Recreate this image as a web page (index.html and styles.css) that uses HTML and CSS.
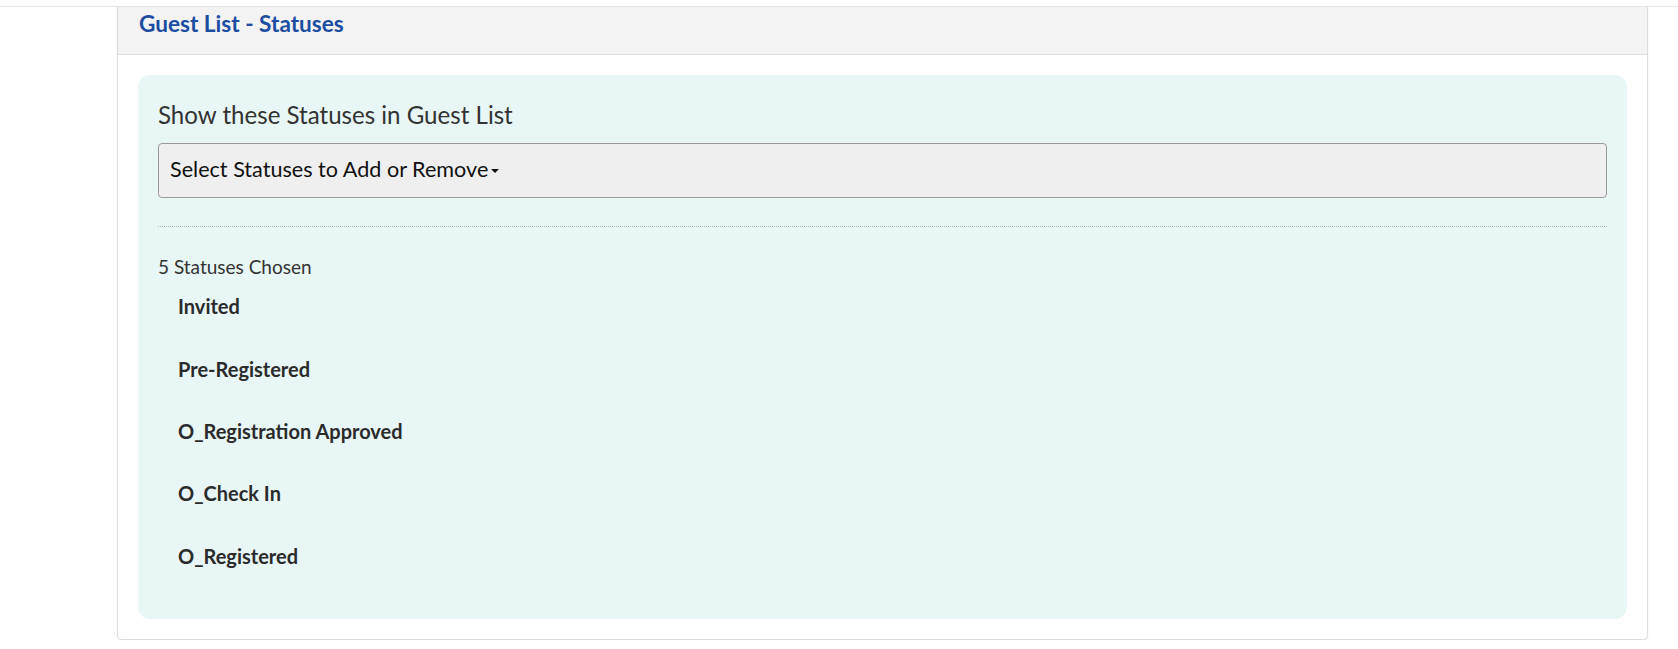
FILE: index.html
```html
<!DOCTYPE html>
<html>
<head>
<meta charset="utf-8">
<link rel="stylesheet" href="styles.css">
</head>
<body>
<div class="page">
  <div class="panel">
    <div class="panel-head">
      <h3 class="panel-title">Guest List - Statuses</h3>
    </div>
    <div class="panel-body">
      <div class="status-box">
        <div class="box-label">Show these Statuses in Guest List</div>
        <div class="dropdown">
          <span class="dropdown-text">Select Statuses to Add or Remove</span><span class="caret"></span>
        </div>
        <div class="divider"></div>
        <div class="chosen-count">5 Statuses Chosen</div>
        <ul class="status-list">
          <li class="status-item">Invited</li>
          <li class="status-item">Pre-Registered</li>
          <li class="status-item">O_Registration Approved</li>
          <li class="status-item">O_Check In</li>
          <li class="status-item">O_Registered</li>
        </ul>
      </div>
    </div>
  </div>
</div>
</body>
</html>
```

FILE: styles.css
```css
html, body {
  margin: 0;
  padding: 0;
  background: #ffffff;
  font-family: Lato, "Open Sans", "Liberation Sans", sans-serif;
  color: #333333;
}

.page {
  margin-top: 6px;
  border-top: 1px solid #e6e6e6;
  padding-left: 117px;
}

.panel {
  width: 1529px;
  border: 1px solid #dcdcdc;
  border-top: none;
  border-radius: 0 0 5px 5px;
  box-shadow: 0 1px 2px rgba(0, 0, 0, 0.08);
  background: #ffffff;
}

.panel-head {
  background: #f3f3f3;
  border-bottom: 1px solid #dddddd;
  height: 48px;
  box-sizing: border-box;
  padding: 4.3px 21px 0;
}

.panel-title {
  margin: 0;
  font-size: 22.6px;
  line-height: 26px;
  font-weight: 700;
  color: #1c4da1;
}

.panel-body {
  padding: 20px;
}

.status-box {
  background: #e8f6f6;
  border-radius: 12px;
  padding: 25.7px 20px 13.1px;
}

.box-label {
  font-size: 24.1px;
  line-height: 28px;
  color: #333333;
  margin-bottom: 14.3px;
}

.dropdown {
  height: 55px;
  box-sizing: border-box;
  border: 1px solid #9a9a9a;
  border-radius: 4px;
  background: #efefef;
  display: flex;
  align-items: center;
  padding: 0 11px 2px;
}

.dropdown-text {
  font-size: 21.6px;
  line-height: 26px;
  color: #111111;
}

.caret {
  display: inline-block;
  width: 0;
  height: 0;
  margin-left: 3px;
  margin-top: 3px;
  border-top: 4px solid #111111;
  border-left: 4px solid transparent;
  border-right: 4px solid transparent;
}

.divider {
  margin-top: 28px;
  border-top: 1px dotted #a9b3b3;
}

.chosen-count {
  margin-top: 28.15px;
  font-size: 19px;
  line-height: 23px;
  color: #333333;
}

.status-list {
  list-style: none;
  margin: 16.1px 0 0;
  padding: 0;
}

.status-item {
  font-size: 20px;
  line-height: 24px;
  font-weight: 700;
  color: #2b2b2b;
  padding: 0 20px;
  margin-bottom: 38.33px;
}
```
